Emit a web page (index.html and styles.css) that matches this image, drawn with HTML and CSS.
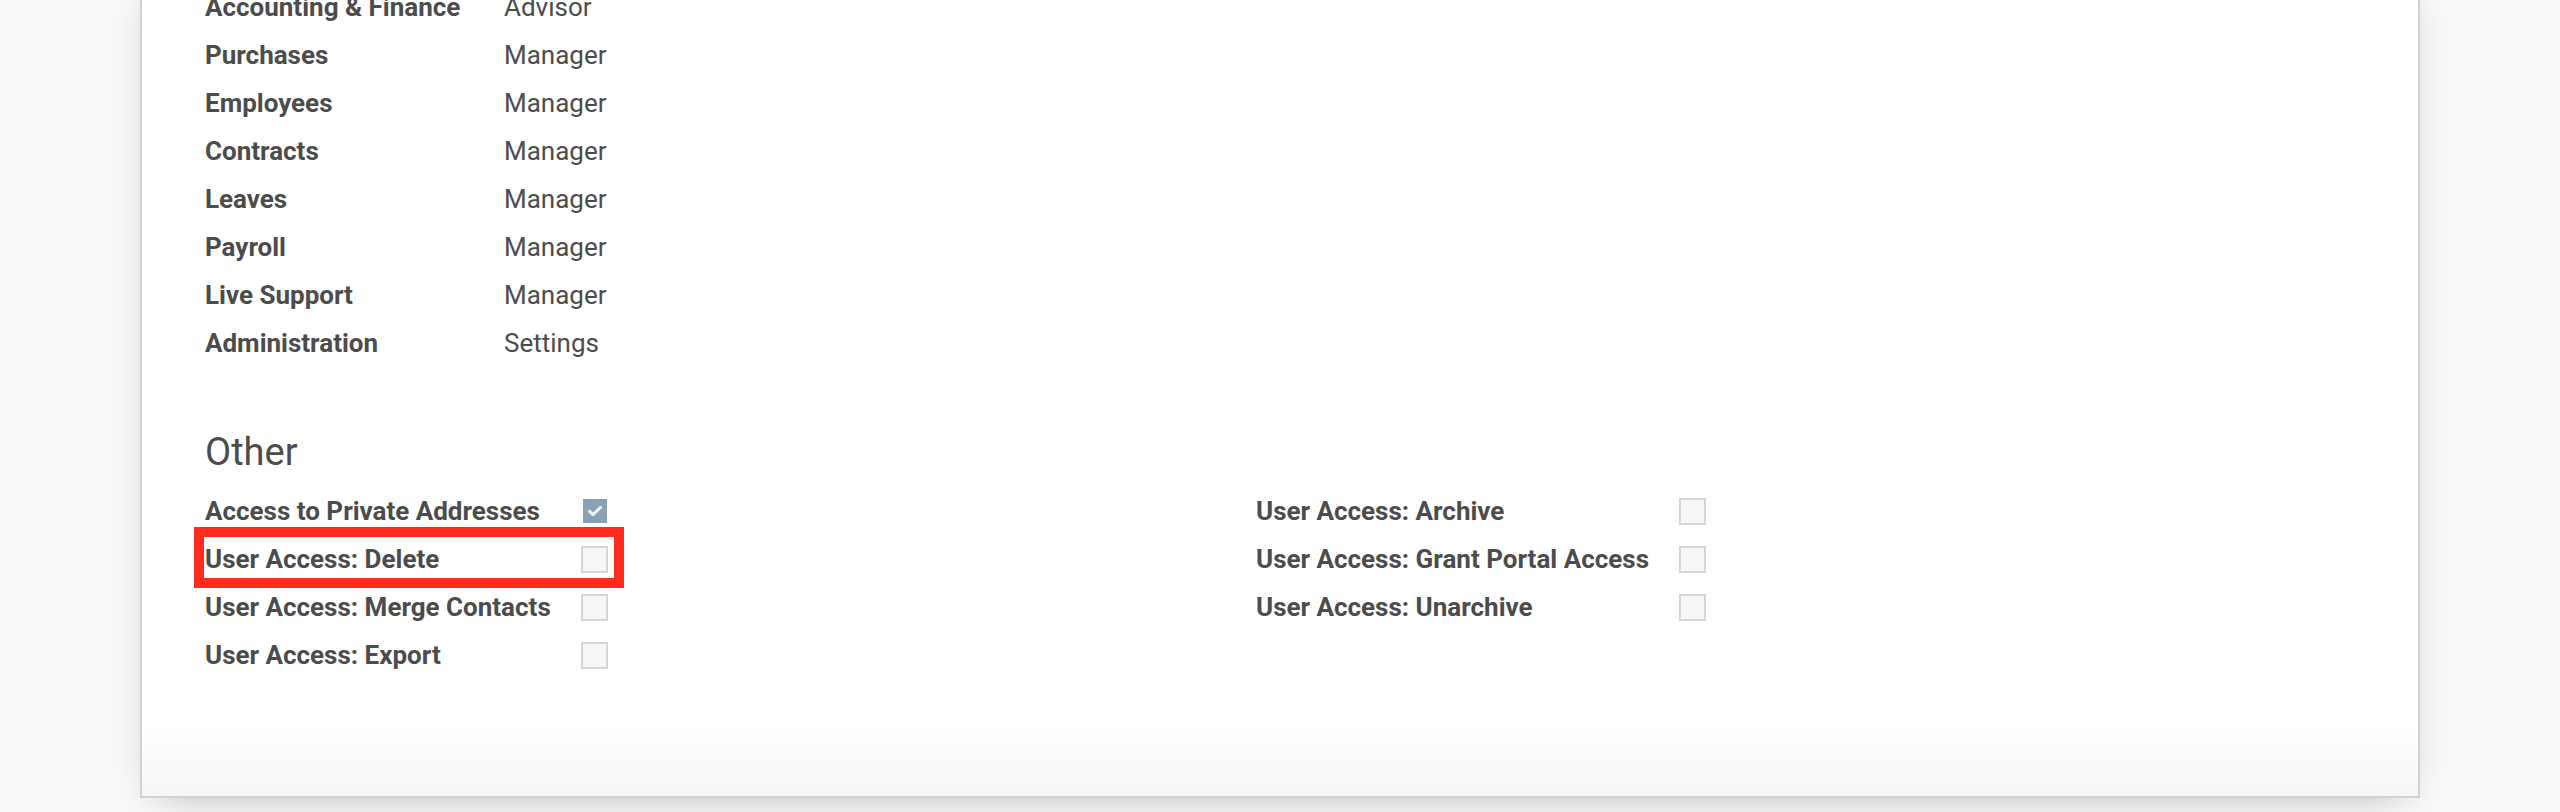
FILE: index.html
```html
<!DOCTYPE html>
<html lang="en">
<head>
<meta charset="utf-8">
<title>User Access Rights</title>
<link rel="stylesheet" href="styles.css">
</head>
<body>
<div class="page">
  <div class="sheet">
    <div class="apps">
      <div class="row"><div class="label">Accounting &amp; Finance</div><div class="value">Advisor</div></div>
      <div class="row"><div class="label">Purchases</div><div class="value">Manager</div></div>
      <div class="row"><div class="label">Employees</div><div class="value">Manager</div></div>
      <div class="row"><div class="label">Contracts</div><div class="value">Manager</div></div>
      <div class="row"><div class="label">Leaves</div><div class="value">Manager</div></div>
      <div class="row"><div class="label">Payroll</div><div class="value">Manager</div></div>
      <div class="row"><div class="label">Live Support</div><div class="value">Manager</div></div>
      <div class="row"><div class="label">Administration</div><div class="value">Settings</div></div>
    </div>

    <h2 class="section-title">Other</h2>

    <div class="other">
      <div class="group group-left">
        <div class="row">
          <div class="label">Access to Private Addresses</div>
          <div class="check-cell"><span class="checkbox checked"><svg viewBox="0 0 24 24" width="24" height="24"><polyline points="6.5,12.2 10,15.6 17.5,8.4" fill="none" stroke="#eef2f5" stroke-width="3" stroke-linecap="round" stroke-linejoin="round"/></svg></span></div>
        </div>
        <div class="row highlight">
          <div class="label">User Access: Delete</div>
          <div class="check-cell"><span class="checkbox"></span></div>
        </div>
        <div class="row">
          <div class="label">User Access: Merge Contacts</div>
          <div class="check-cell"><span class="checkbox"></span></div>
        </div>
        <div class="row">
          <div class="label">User Access: Export</div>
          <div class="check-cell"><span class="checkbox"></span></div>
        </div>
      </div>
      <div class="group group-right">
        <div class="row">
          <div class="label">User Access: Archive</div>
          <div class="check-cell"><span class="checkbox"></span></div>
        </div>
        <div class="row">
          <div class="label">User Access: Grant Portal Access</div>
          <div class="check-cell"><span class="checkbox"></span></div>
        </div>
        <div class="row">
          <div class="label">User Access: Unarchive</div>
          <div class="check-cell"><span class="checkbox"></span></div>
        </div>
      </div>
    </div>
  </div>
</div>
</body>
</html>
```

FILE: styles.css
```css
html, body {
  margin: 0;
  padding: 0;
}

body {
  background: #f9f9f9;
  font-family: Roboto, "Noto Sans", "Liberation Sans", sans-serif;
  color: #4c4c4c;
  overflow: hidden;
}

.page {
  padding: 0 140px 16px 140px;
}

.sheet {
  margin-top: -32px;
  padding: 13px 61px 117px 63px;
  border: 2px solid #cdd3da;
  background: linear-gradient(to bottom, #ffffff calc(100% - 70px), #f6f6f6 100%);
  box-shadow: 0 12px 40px -18px rgba(0, 0, 0, 0.32);
}

.row {
  display: flex;
  align-items: center;
  height: 48px;
  font-size: 26px;
  line-height: 48px;
  white-space: nowrap;
}

.label {
  font-weight: 700;
}

.apps .label {
  width: 299px;
}

.value {
  font-weight: 400;
}

.section-title {
  margin: 62px 0 12px 0;
  font-size: 38px;
  line-height: 46px;
  font-weight: 400;
  color: #4c4c4c;
}

.other {
  display: grid;
  grid-template-columns: 1051px 1fr;
}

.group-left .label {
  width: 376px;
}

.group-right .label {
  width: 423px;
}

.check-cell {
  width: 27px;
  height: 27px;
  display: flex;
  align-items: center;
  justify-content: center;
}

.checkbox {
  box-sizing: border-box;
  display: block;
  width: 27px;
  height: 27px;
  border: 2px solid #d6d6d6;
  background: #f6f6f4;
}

.checkbox.checked {
  width: 24px;
  height: 24px;
  border: none;
  background: #8ba0b2;
}

.checkbox svg {
  display: block;
}

.highlight {
  position: relative;
}

.highlight::after {
  content: "";
  position: absolute;
  left: -11px;
  top: -8px;
  width: 430px;
  height: 61px;
  box-sizing: border-box;
  border: 10px solid #fe2b1f;
  pointer-events: none;
}
```
